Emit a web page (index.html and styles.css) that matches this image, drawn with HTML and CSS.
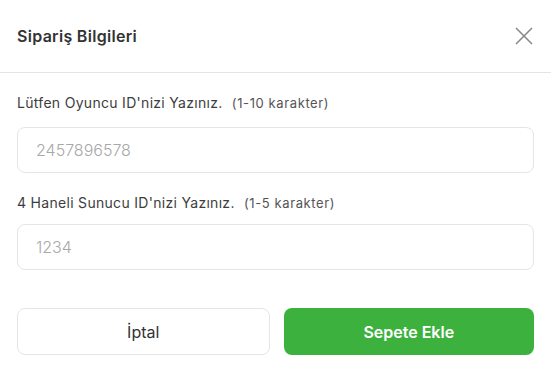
FILE: index.html
```html
<!DOCTYPE html>
<html>
	<head>
		<meta charset="utf-8" />
		<meta name="viewport" content="width=device-width, initial-scale=1">
		<title>Sipariş Bilgileri</title>
		<link rel="stylesheet" href="styles.css">
	</head>
	<body>
		<div class="modal">
			<div class="header">
				<span class="title">Sipariş Bilgileri</span>
				<a href="#" class="close">
					<svg width="18" height="18" viewBox="0 0 18 18">
						<path d="M1 1L17 17M17 1L1 17" stroke="#8a8a8a" stroke-width="1.6" fill="none" />
					</svg>
				</a>
			</div>
			<div class="content">
				<div class="field first">
					<label class="label">Lütfen Oyuncu ID'nizi Yazınız. <small>(1-10 karakter)</small></label>
					<input type="text" class="pt" placeholder="2457896578">
				</div>
				<div class="field second">
					<label class="label">4 Haneli Sunucu ID'nizi Yazınız. <small>(1-5 karakter)</small></label>
					<input type="text" class="pt" placeholder="1234">
				</div>
				<div class="actions">
					<button class="btn cancel">İptal</button>
					<button class="btn add">Sepete Ekle</button>
				</div>
			</div>
		</div>
	</body>
</html>
```

FILE: styles.css
```css
* {
	padding: 0;
	margin: 0;
	box-sizing: border-box;
	text-decoration: none;
}

body {
	background-color: #fff;
	font-family: "Inter", "Noto Sans", sans-serif;
}

.modal {
	width: 551px;
	height: 372px;
	background-color: #fff;
}

.header {
	height: 73px;
	padding: 0 17px;
	display: flex;
	align-items: center;
	justify-content: space-between;
	border-bottom: 1px solid #e4e4e4;
}

.title {
	font-size: 16px;
	font-weight: 600;
	letter-spacing: 0.3px;
	color: #333;
}

.close {
	display: flex;
	margin-right: 1px;
}

.content {
	padding: 20px 17px 0;
}

.field {
	display: flex;
	flex-direction: column;
}

.label {
	font-size: 14px;
	line-height: 20px;
	letter-spacing: 0.3px;
	color: #3d3d3d;
}

.label small {
	font-size: 13px;
	letter-spacing: 0.6px;
	color: #555;
	margin-left: 5px;
}

.first .label {
	margin-bottom: 14px;
}

.second {
	margin-top: 20px;
}

.second .label {
	margin-bottom: 11px;
}

.pt {
	display: block;
	width: 100%;
	height: 46px;
	padding-left: 18px;
	border: 1px solid #e5e5e5;
	border-radius: 8px;
	font-family: inherit;
	font-size: 16px;
	color: #666;
	outline: none;
}

.pt::placeholder {
	color: #a8a8a8;
	font-weight: 300;
}

.actions {
	display: flex;
	gap: 14px;
	margin-top: 38px;
}

.btn {
	flex: 1;
	height: 47px;
	border-radius: 8px;
	font-family: inherit;
	font-size: 16px;
	cursor: pointer;
}

.cancel {
	background-color: #fff;
	border: 1px solid #e5e5e5;
	color: #333;
}

.add {
	background-color: #3db13d;
	border: none;
	color: #fff;
	font-weight: 600;
}
```
